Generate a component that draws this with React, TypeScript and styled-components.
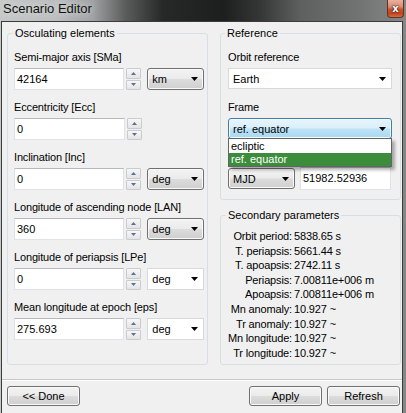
import React from "react";
import styled, { createGlobalStyle, css } from "styled-components";

const GlobalStyle = createGlobalStyle`
  html, body { margin: 0; padding: 0; }
  body {
    width: 406px; height: 413px; overflow: hidden;
    font-family: "Liberation Sans", Arial, sans-serif;
    font-size: 11px; color: #000;
  }
`;

const Window = styled.div`
  width: 406px;
  height: 413px;
  display: flex;
  flex-direction: column;
  background: linear-gradient(90deg, #c6c9c9 0%, #bbbebe 14%, #9ea1a1 23%, #5a5c5c 31%, #272929 40%, #1d1f1e 55%, #353736 64%, #5e605f 74%, #717372 88%, #868887 100%);
`;

const TitleBar = styled.div`
  height: 21px;
  flex: none;
  display: flex;
  justify-content: space-between;
  align-items: flex-start;
`;

const Title = styled.span`
  font-size: 13px;
  line-height: 16px;
  padding: 1px 0 0 3px;
  color: #111;
  text-shadow: 0 0 6px rgba(225, 228, 228, 0.95), 0 0 12px rgba(225, 228, 228, 0.8);
`;

const CloseButton = styled.div`
  width: 17px;
  height: 18px;
  margin-right: 2px;
  box-sizing: border-box;
  border: 1px solid #5e3428;
  border-top: none;
  border-radius: 0 0 4px 4px;
  background: linear-gradient(#e9b19f 0%, #dd8b70 40%, #c9522d 55%, #c2441e 80%, #d46b45 100%);
  display: flex;
  align-items: center;
  justify-content: center;
  color: #fff;
  font: bold 10px "DejaVu Sans", sans-serif;
  text-shadow: 0 0 1px #222, 0 0 1px #222, 0 0 2px #222;
`;

const Client = styled.div`
  flex: 1;
  min-height: 0;
  margin: 0 3px 0 1px;
  border: 1px solid #3a3c3c;
  border-bottom: none;
  background: #f0f0f0;
  display: flex;
  flex-direction: column;
`;

const Main = styled.div`
  display: grid;
  grid-template-columns: 201px 181px;
  column-gap: 12px;
  padding: 4px 0 0 5px;
`;

const Column = styled.div`
  display: flex;
  flex-direction: column;
  gap: 8px;
`;

const Group = styled.fieldset<{ $grow?: boolean }>`
  margin: 0;
  padding: 0;
  min-width: 0;
  border: 1px solid #d5dfe5;
  border-radius: 3px;
  ${(p) => p.$grow && css`flex: 1;`}
`;

const Legend = styled.legend<{ $indent: number }>`
  padding: 0 2px;
  margin-left: ${(p) => p.$indent}px;
  font-size: 11px;
  line-height: 14px;
`;

const GroupBody = styled.div<{ $pad: string }>`
  display: flex;
  flex-direction: column;
  padding: ${(p) => p.$pad};
`;

const Field = styled.div<{ $space?: number }>`
  display: flex;
  flex-direction: column;
  gap: 4px;
  margin-top: ${(p) => p.$space ?? 0}px;
`;

const Label = styled.div`
  height: 14px;
  line-height: 14px;
  white-space: nowrap;
  letter-spacing: -0.15px;
`;

const Controls = styled.div<{ $gap?: number }>`
  display: flex;
  align-items: center;
  gap: ${(p) => p.$gap ?? 0}px;
`;

const TextBox = styled.div<{ $w: number; $h?: number }>`
  width: ${(p) => p.$w}px;
  height: ${(p) => p.$h ?? 22}px;
  box-sizing: border-box;
  background: #fff;
  border: 1px solid #dfe3e8;
  border-top-color: #b5b8bf;
  padding: 0 2px;
  line-height: ${(p) => (p.$h ?? 22) - 2}px;
  white-space: nowrap;
`;

const Spinner = styled.div`
  display: flex;
  flex-direction: column;
  gap: 1px;
  width: 15px;
  height: 22px;
  margin: 0 6px 0 2px;
`;

const SpinButton = styled.div`
  flex: 1;
  box-sizing: border-box;
  border: 1px solid #c9cbce;
  border-radius: 1px;
  background: linear-gradient(#f7f7f7, #e4e4e4);
  display: flex;
  align-items: center;
  justify-content: center;
`;

type ComboKind = "button" | "flat" | "focus";

const comboLooks: Record<ComboKind, ReturnType<typeof css>> = {
  button: css`
    border: 1px solid #707070;
    border-radius: 3px;
    background: linear-gradient(#f3f3f3 0%, #ebebeb 48%, #dcdcdc 52%, #cfcfcf 100%);
    box-shadow: inset 0 0 0 1px #fafafa;
  `,
  flat: css`
    border: 1px solid #d9d9d9;
    background: #fff;
  `,
  focus: css`
    border: 1px solid #3c7fb1;
    border-radius: 3px;
    background: linear-gradient(#e8f5fc 0%, #d9effa 48%, #bfe3f6 52%, #a7d8f1 100%);
    box-shadow: inset 0 0 0 1px #f4fbff;
  `,
};

const Combo = styled.div<{ $kind: ComboKind; $w?: number; $h?: number }>`
  width: ${(p) => (p.$w ? `${p.$w}px` : "auto")};
  height: ${(p) => p.$h ?? 22}px;
  box-sizing: border-box;
  display: flex;
  align-items: center;
  justify-content: space-between;
  padding: 0 5px 0 4px;
  white-space: nowrap;
  ${(p) => comboLooks[p.$kind]}
`;

const ComboWrap = styled.div`
  position: relative;
`;

const DropList = styled.div`
  position: absolute;
  left: 0;
  right: 0;
  top: calc(100% - 1px);
  z-index: 2;
  box-sizing: border-box;
  border: 1px solid #646464;
  background: #fff;
  padding-top: 1px;
  box-shadow: 3px 3px 3px rgba(0, 0, 0, 0.3);
`;

const DropItem = styled.div<{ $selected?: boolean }>`
  height: 13px;
  line-height: 13px;
  padding-left: 2px;
  background: ${(p) => (p.$selected ? "#3b8d3b" : "transparent")};
  color: ${(p) => (p.$selected ? "#fff" : "#000")};
`;

const ParamGrid = styled.div`
  display: grid;
  grid-template-columns: 67px auto;
  column-gap: 2px;
  line-height: 14.6px;
  white-space: nowrap;
`;

const ParamName = styled.div`
  text-align: right;
  letter-spacing: -0.15px;
`;

const ParamValue = styled.div`
  letter-spacing: -0.15px;
`;

const Separator = styled.div`
  margin-top: 14px;
  border-top: 1px solid #c9c9c9;
  border-bottom: 1px solid #fff;
`;

const Footer = styled.div`
  display: flex;
  justify-content: space-between;
  padding: 5px 2px 0 5px;
`;

const ButtonGroup = styled.div`
  display: flex;
  gap: 5px;
`;

const Button = styled.div`
  width: 73px;
  height: 20px;
  box-sizing: border-box;
  border: 1px solid #707070;
  border-radius: 3px;
  background: linear-gradient(#f3f3f3 0%, #ebebeb 48%, #dcdcdc 52%, #cfcfcf 100%);
  box-shadow: inset 0 0 0 1px #fafafa;
  display: flex;
  align-items: center;
  justify-content: center;
  font-size: 11px;
`;

const Arrow = () => (
  <svg width="7" height="4" viewBox="0 0 7 4">
    <path d="M0 0H7L3.5 4Z" fill="#000" />
  </svg>
);

const SpinArrow = ({ up }: { up?: boolean }) => (
  <svg width="5" height="3" viewBox="0 0 5 3">
    <path d={up ? "M0 3H5L2.5 0Z" : "M0 0H5L2.5 3Z"} fill="#5a6f93" />
  </svg>
);

type Element = { label: string; value: string; unit?: string; kind?: ComboKind };

const elements: Element[] = [
  { label: "Semi-major axis [SMa]", value: "42164", unit: "km", kind: "button" },
  { label: "Eccentricity [Ecc]", value: "0" },
  { label: "Inclination [Inc]", value: "0", unit: "deg", kind: "button" },
  { label: "Longitude of ascending node [LAN]", value: "360", unit: "deg", kind: "button" },
  { label: "Longitude of periapsis [LPe]", value: "0", unit: "deg", kind: "flat" },
  { label: "Mean longitude at epoch [eps]", value: "275.693", unit: "deg", kind: "flat" },
];

const params: [string, string][] = [
  ["Orbit period:", "5838.65 s"],
  ["T. periapsis:", "5661.44 s"],
  ["T. apoapsis:", "2742.11 s"],
  ["Periapsis:", "7.00811e+006 m"],
  ["Apoapsis:", "7.00811e+006 m"],
  ["Mn anomaly:", "10.927 ~"],
  ["Tr anomaly:", "10.927 ~"],
  ["Mn longitude:", "10.927 ~"],
  ["Tr longitude:", "10.927 ~"],
];

export default function App() {
  return (
    <>
      <GlobalStyle />
      <Window>
        <TitleBar>
          <Title>Scenario Editor</Title>
          <CloseButton>x</CloseButton>
        </TitleBar>
        <Client>
          <Main>
            <Group>
              <Legend $indent={5}>Osculating elements</Legend>
              <GroupBody $pad="10px 3px 24px 6px">
                {elements.map((el, i) => (
                  <Field key={el.label} $space={i === 0 ? 0 : 10}>
                    <Label>{el.label}</Label>
                    <Controls>
                      <TextBox $w={111}>{el.value}</TextBox>
                      <Spinner>
                        <SpinButton>
                          <SpinArrow up />
                        </SpinButton>
                        <SpinButton>
                          <SpinArrow />
                        </SpinButton>
                      </Spinner>
                      {el.unit && (
                        <Combo $kind={el.kind ?? "button"} $w={57}>
                          <span>{el.unit}</span>
                          <Arrow />
                        </Combo>
                      )}
                    </Controls>
                  </Field>
                ))}
              </GroupBody>
            </Group>
            <Column>
              <Group>
                <Legend $indent={4}>Reference</Legend>
                <GroupBody $pad="10px 8px 9px 7px">
                  <Field>
                    <Label>Orbit reference</Label>
                    <Combo $kind="flat" $h={21}>
                      <span>Earth</span>
                      <Arrow />
                    </Combo>
                  </Field>
                  <Field $space={11}>
                    <Label>Frame</Label>
                    <ComboWrap>
                      <Combo $kind="focus" $h={21}>
                        <span>ref. equator</span>
                        <Arrow />
                      </Combo>
                      <DropList>
                        <DropItem>ecliptic</DropItem>
                        <DropItem $selected>ref. equator</DropItem>
                      </DropList>
                    </ComboWrap>
                  </Field>
                  <Field $space={28}>
                    <Controls $gap={5}>
                      <Combo $kind="button" $w={67} $h={21}>
                        <span>MJD</span>
                        <Arrow />
                      </Combo>
                      <TextBox $w={91} $h={23}>51982.52936</TextBox>
                    </Controls>
                  </Field>
                </GroupBody>
              </Group>
              <Group $grow>
                <Legend $indent={5}>Secondary parameters</Legend>
                <GroupBody $pad="7px 4px 4px 4px">
                  <ParamGrid>
                    {params.map(([k, v]) => (
                      <React.Fragment key={k}>
                        <ParamName>{k}</ParamName>
                        <ParamValue>{v}</ParamValue>
                      </React.Fragment>
                    ))}
                  </ParamGrid>
                </GroupBody>
              </Group>
            </Column>
          </Main>
          <Separator />
          <Footer>
            <Button>&lt;&lt; Done</Button>
            <ButtonGroup>
              <Button>Apply</Button>
              <Button>Refresh</Button>
            </ButtonGroup>
          </Footer>
        </Client>
      </Window>
    </>
  );
}
